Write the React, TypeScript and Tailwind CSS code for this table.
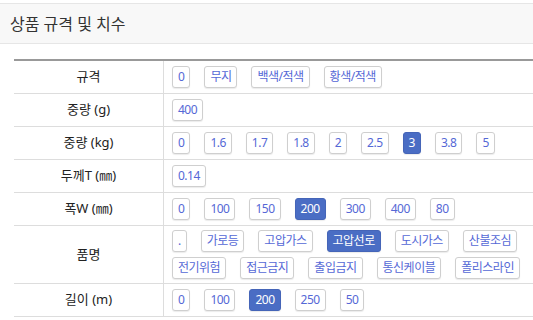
import React from 'react';

type SpecRow = {
  label: string;
  options: string[];
  selected?: string;
};

const ROWS: SpecRow[] = [
  { label: '규격', options: ['0', '무지', '백색/적색', '황색/적색'] },
  { label: '중량 (g)', options: ['400'] },
  { label: '중량 (kg)', options: ['0', '1.6', '1.7', '1.8', '2', '2.5', '3', '3.8', '5'], selected: '3' },
  { label: '두께T (㎜)', options: ['0.14'] },
  { label: '폭W (㎜)', options: ['0', '100', '150', '200', '300', '400', '80'], selected: '200' },
  {
    label: '품명',
    options: ['.', '가로등', '고압가스', '고압선로', '도시가스', '산불조심', '전기위험', '접근금지', '출입금지', '통신케이블', '폴리스라인'],
    selected: '고압선로',
  },
  { label: '길이 (m)', options: ['0', '100', '200', '250', '50'], selected: '200' },
];

const OptionButton: React.FC<{ text: string; active: boolean }> = ({ text, active }) => (
  <button
    type="button"
    className={`h-[22px] px-[5px] rounded-[3px] border text-[12px] leading-[20px] tracking-[-0.5px] whitespace-nowrap shadow-[0_1px_1px_rgba(0,0,0,0.08)] ${
      active ? 'bg-[#4a6dc4] border-[#4565b8] text-white' : 'bg-white border-[#cfcfcf] text-[#5568d6]'
    }`}
  >
    {text}
  </button>
);

export default function App() {
  return (
    <div
      className="w-[533px] h-[320px] overflow-hidden bg-white text-[#222]"
      style={{ fontFamily: '"Noto Sans", "Noto Sans CJK KR", sans-serif' }}
    >
      {/* Section header */}
      <div className="mt-[3px] h-[41px] border-y border-[#e6e6e6] bg-[#f8f8f8] flex items-center px-[10px]">
        <h2 className="text-[16px] text-[#333]">상품 규격 및 치수</h2>
      </div>

      {/* Spec table, runs past the right edge of the frame */}
      <div className="mt-[15px] ml-[14px] w-[540px] border-t-2 border-[#999]">
        {ROWS.map((row) => (
          <div key={row.label} className="grid grid-cols-[150px_1fr] border-b border-[#ddd]">
            <div className="flex items-center justify-center border-r border-[#ddd] text-[13px]">
              {row.label}
            </div>
            <div className="min-h-[32px] py-[4px] px-[8px] flex flex-wrap items-center content-center gap-x-[14px] gap-y-[5px]">
              {row.options.map((opt) => (
                <OptionButton key={opt} text={opt} active={opt === row.selected} />
              ))}
            </div>
          </div>
        ))}
      </div>
    </div>
  );
}
